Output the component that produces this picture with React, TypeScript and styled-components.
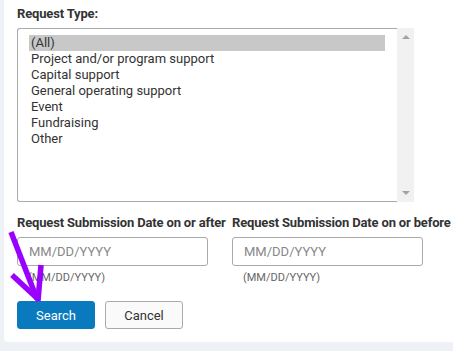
import React from "react";
import styled, { createGlobalStyle } from "styled-components";

const GlobalStyle = createGlobalStyle`
  html, body {
    margin: 0;
    padding: 0;
    background: #eef1f5;
    font-family: Roboto, "Liberation Sans", Arial, sans-serif;
  }
`;

const Page = styled.div`
  position: relative;
  width: 453px;
  height: 351px;
  overflow: hidden;
`;

const Panel = styled.div`
  margin-left: 4px;
  background: #fff;
  border-radius: 0 0 0 4px;
  padding: 6px 0 13px 13px;
`;

const Label = styled.div`
  font-size: 13px;
  line-height: 16px;
  font-weight: 700;
  letter-spacing: -0.16px;
  color: #333;
  white-space: nowrap;
`;

const ListBox = styled.div`
  display: flex;
  margin-top: 6px;
  width: 397px;
  height: 174px;
`;

const ListArea = styled.div`
  flex: 1;
  border: 1px solid #aaa;
  border-right: none;
  border-radius: 3px 0 0 3px;
  padding: 6px 12px 0 11px;
`;

const Option = styled.div<{ $selected?: boolean }>`
  height: 16px;
  line-height: 16px;
  font-size: 13px;
  color: #333;
  padding-left: 2px;
  background: ${(p) => (p.$selected ? "#c8c8c8" : "transparent")};
`;

const ScrollTrack = styled.div`
  width: 17px;
  background: #f1f1f1;
  display: flex;
  flex-direction: column;
  justify-content: space-between;
  align-items: center;
  padding: 7px 0 7px;
`;

const Arrow = styled.div<{ $down?: boolean }>`
  width: 0;
  height: 0;
  border-left: 4px solid transparent;
  border-right: 4px solid transparent;
  ${(p) =>
    p.$down
      ? "border-top: 4px solid #a3a3a3;"
      : "border-bottom: 4px solid #a3a3a3;"}
`;

const DateRow = styled.div`
  display: grid;
  grid-template-columns: 215px auto;
  margin-top: 13px;
`;

const Field = styled.div`
  display: flex;
  flex-direction: column;
`;

const DateInput = styled.input`
  box-sizing: border-box;
  margin-top: 6px;
  width: 191px;
  height: 29px;
  border: 1px solid #aaa;
  border-radius: 3px;
  padding: 0 11px;
  font-family: inherit;
  font-size: 13px;
  color: #333;
  outline: none;
  &::placeholder {
    color: #888;
  }
`;

const Hint = styled.div`
  margin-top: 4px;
  padding-left: 11px;
  font-size: 11px;
  line-height: 16px;
  color: #666;
`;

const Actions = styled.div`
  display: flex;
  gap: 10px;
  margin-top: 15px;
`;

const Button = styled.button<{ $primary?: boolean }>`
  box-sizing: border-box;
  width: 78px;
  height: 28px;
  border-radius: 3px;
  font-family: inherit;
  font-size: 13px;
  cursor: pointer;
  border: 1px solid ${(p) => (p.$primary ? "#0a7abf" : "#aaa")};
  background: ${(p) => (p.$primary ? "#0a7abf" : "#fafafa")};
  color: ${(p) => (p.$primary ? "#fff" : "#333")};
  font-weight: 400;
`;

const Pointer = styled.svg`
  position: absolute;
  left: 0;
  top: 0;
  pointer-events: none;
`;

const options = [
  "(All)",
  "Project and/or program support",
  "Capital support",
  "General operating support",
  "Event",
  "Fundraising",
  "Other",
];

export default function App() {
  return (
    <Page>
      <GlobalStyle />
      <Panel>
        <Label>Request Type:</Label>
        <ListBox>
          <ListArea>
            {options.map((o, i) => (
              <Option key={o} $selected={i === 0}>
                {o}
              </Option>
            ))}
          </ListArea>
          <ScrollTrack>
            <Arrow />
            <Arrow $down />
          </ScrollTrack>
        </ListBox>
        <DateRow>
          <Field>
            <Label>Request Submission Date on or after</Label>
            <DateInput placeholder="MM/DD/YYYY" />
            <Hint>(MM/DD/YYYY)</Hint>
          </Field>
          <Field>
            <Label>Request Submission Date on or before</Label>
            <DateInput placeholder="MM/DD/YYYY" />
            <Hint>(MM/DD/YYYY)</Hint>
          </Field>
        </DateRow>
        <Actions>
          <Button $primary>Search</Button>
          <Button>Cancel</Button>
        </Actions>
      </Panel>
      <Pointer width="60" height="320" viewBox="0 0 60 320">
        <g stroke="#9a00ff" strokeWidth="5.5" strokeLinecap="butt" fill="none">
          <line x1="11" y1="232" x2="37" y2="299" />
          <line x1="12" y1="275" x2="39" y2="300" />
          <line x1="41" y1="265" x2="38" y2="301" />
        </g>
      </Pointer>
    </Page>
  );
}
